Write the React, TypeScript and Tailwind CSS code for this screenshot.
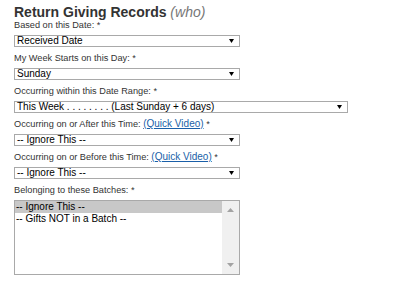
import React from "react"

function Arrow() {
    return (
        <svg width="5" height="4" viewBox="0 0 5 4" className="mr-[5px]">
            <path d="M0 0h5L2.5 4z" fill="#000" />
        </svg>
    )
}

function FakeSelect({ value, width }: { value: string; width: string }) {
    return (
        <div
            className={`flex h-[12px] items-center justify-between border border-[#a9a9a9] bg-white pl-[2px] text-[10px] leading-none text-black ${width}`}
        >
            <span>{value}</span>
            <Arrow />
        </div>
    )
}

function Label({ children }: { children: React.ReactNode }) {
    return <div className="mb-[4px] text-[9.2px] leading-[12px] text-[#333]">{children}</div>
}

function Video() {
    return <span className="text-[10px] text-[#1a5fa8] underline">(Quick Video)</span>
}

export default function App() {
    return (
        <div className="h-[294px] w-[394px] bg-white px-[14px] pt-[6px] font-['Liberation_Sans',Arial,sans-serif]">
            <h2 className="text-[14px] leading-[13px] font-bold text-[#333]">
                Return Giving Records <span className="font-normal italic text-[#777]">(who)</span>
            </h2>

            <Label>Based on this Date: *</Label>
            <FakeSelect value="Received Date" width="w-[226px]" />

            <div className="mt-[5px]">
                <Label>My Week Starts on this Day: *</Label>
                <FakeSelect value="Sunday" width="w-[226px]" />
            </div>

            <div className="mt-[5px]">
                <Label>Occurring within this Date Range: *</Label>
                <FakeSelect value="This Week . . . . . . . . (Last Sunday + 6 days)" width="w-[334px]" />
            </div>

            <div className="mt-[5px]">
                <Label>
                    Occurring on or After this Time: <Video /> *
                </Label>
                <FakeSelect value="-- Ignore This --" width="w-[226px]" />
            </div>

            <div className="mt-[5px]">
                <Label>
                    Occurring on or Before this Time: <Video /> *
                </Label>
                <FakeSelect value="-- Ignore This --" width="w-[226px]" />
            </div>

            <div className="mt-[5px]">
                <Label>Belonging to these Batches: *</Label>
                <div className="flex h-[75px] w-[226px] border border-[#a9a9a9] bg-white text-[10px] leading-[12px] text-black">
                    <div className="flex-1">
                        <div className="bg-[#c8c8c8] pl-[1px]">-- Ignore This --</div>
                        <div className="pl-[1px]">-- Gifts NOT in a Batch --</div>
                    </div>
                    <div className="flex w-[17px] flex-col items-center justify-between bg-[#f0f0f0] py-[7px]">
                        <svg width="7" height="4" viewBox="0 0 7 4">
                            <path d="M3.5 0L7 4H0z" fill="#a3a3a3" />
                        </svg>
                        <svg width="7" height="4" viewBox="0 0 7 4">
                            <path d="M0 0h7L3.5 4z" fill="#a3a3a3" />
                        </svg>
                    </div>
                </div>
            </div>
        </div>
    )
}
